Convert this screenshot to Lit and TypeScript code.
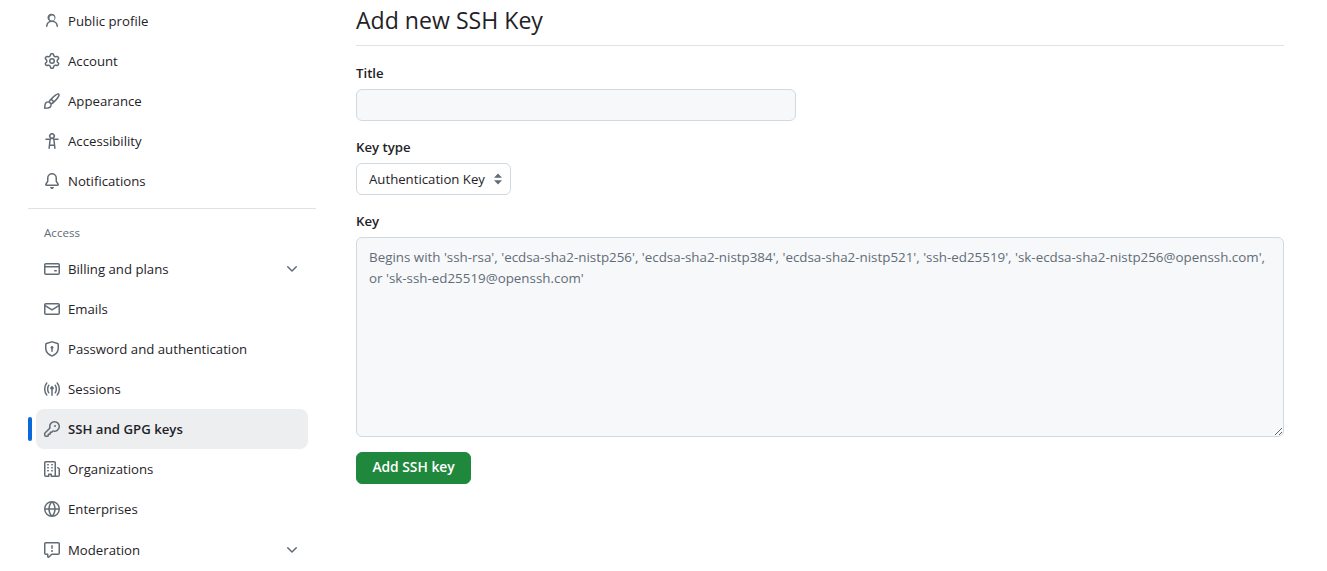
import { LitElement, html, css, svg } from "lit";
import { customElement } from "lit/decorators.js";

const ICONS: Record<string, string> = {
  person: "M10.561 8.073a6.005 6.005 0 0 1 3.432 5.142.75.75 0 1 1-1.498.07 4.5 4.5 0 0 0-8.99 0 .75.75 0 1 1-1.498-.07 6.004 6.004 0 0 1 3.431-5.142 3.999 3.999 0 1 1 4.123 0ZM10.5 5a2.5 2.5 0 1 0-5 0 2.5 2.5 0 0 0 5 0Z",
  gear: "M8 0a8.2 8.2 0 0 1 .701.031C9.444.095 9.99.645 10.16 1.29l.288 1.107c.018.066.079.158.212.224.231.114.454.243.668.386.123.082.233.09.299.071l1.103-.303c.644-.176 1.392.021 1.82.63.27.385.506.792.704 1.218.315.675.111 1.422-.364 1.891l-.814.806c-.049.048-.098.147-.088.294.016.257.016.515 0 .772-.01.147.038.246.088.294l.814.806c.475.469.679 1.216.364 1.891a7.977 7.977 0 0 1-.704 1.217c-.428.61-1.176.807-1.82.63l-1.102-.302c-.067-.019-.177-.011-.3.071a5.909 5.909 0 0 1-.668.386c-.133.066-.194.158-.211.224l-.29 1.106c-.168.646-.715 1.196-1.458 1.26a8.006 8.006 0 0 1-1.402 0c-.743-.064-1.289-.614-1.458-1.26l-.289-1.106c-.018-.066-.079-.158-.212-.224a5.738 5.738 0 0 1-.668-.386c-.123-.082-.233-.09-.299-.071l-1.103.303c-.644.176-1.392-.021-1.82-.63a8.12 8.12 0 0 1-.704-1.218c-.315-.675-.111-1.422.363-1.891l.815-.806c.05-.048.098-.147.088-.294a6.214 6.214 0 0 1 0-.772c.01-.147-.038-.246-.088-.294l-.815-.806C.635 6.045.431 5.298.746 4.623a7.92 7.92 0 0 1 .704-1.217c.428-.61 1.176-.807 1.82-.63l1.102.302c.067.019.177.011.3-.071.214-.143.437-.272.668-.386.133-.066.194-.158.211-.224l.29-1.106C6.009.645 6.556.095 7.299.03 7.53.01 7.764 0 8 0Zm-.571 1.525c-.036.003-.108.036-.137.146l-.289 1.105c-.147.561-.549.967-.998 1.189-.173.086-.34.183-.5.29-.417.278-.97.423-1.529.27l-1.103-.303c-.109-.03-.175.016-.195.045-.22.312-.412.644-.573.99-.014.031-.021.11.059.19l.815.806c.411.406.562.957.53 1.456a4.709 4.709 0 0 0 0 .582c.032.499-.119 1.05-.53 1.456l-.815.806c-.081.08-.073.159-.059.19.162.346.353.677.573.989.02.03.085.076.195.046l1.102-.303c.56-.153 1.113-.008 1.53.27.161.107.328.204.501.29.447.222.85.629.997 1.189l.289 1.105c.029.109.101.143.137.146a6.6 6.6 0 0 0 1.142 0c.036-.003.108-.036.137-.146l.289-1.105c.147-.561.549-.967.998-1.189.173-.086.34-.183.5-.29.417-.278.97-.423 1.529-.27l1.103.303c.109.029.175-.016.195-.045.22-.313.411-.644.573-.99.014-.031.021-.11-.059-.19l-.815-.806c-.411-.406-.562-.957-.53-1.456a4.709 4.709 0 0 0 0-.582c-.032-.499.119-1.05.53-1.456l.815-.806c.081-.08.073-.159.059-.19a6.464 6.464 0 0 0-.573-.989c-.02-.03-.085-.076-.195-.046l-1.102.303c-.56.153-1.113.008-1.53-.27a4.44 4.44 0 0 0-.501-.29c-.447-.222-.85-.629-.997-1.189l-.289-1.105c-.029-.11-.101-.143-.137-.146a6.6 6.6 0 0 0-1.142 0ZM11 8a3 3 0 1 1-6 0 3 3 0 0 1 6 0ZM9.5 8a1.5 1.5 0 1 0-3.001.001A1.5 1.5 0 0 0 9.5 8Z",
  paintbrush: "M11.134 1.535c.7-.509 1.416-.942 2.076-1.155.649-.21 1.463-.267 2.069.34.603.601.568 1.411.368 2.07-.202.668-.624 1.39-1.125 2.096-1.011 1.424-2.496 2.987-3.775 4.249-1.098 1.084-2.132 1.839-3.04 2.3a3.744 3.744 0 0 1-1.055 3.217c-.431.431-1.065.691-1.657.861-.614.177-1.294.287-1.914.357A21.151 21.151 0 0 1 .797 16H.743l.007-.75H.749L.742 16a.75.75 0 0 1-.743-.742l.743-.008-.742.007v-.054a21.25 21.25 0 0 1 .13-2.284c.067-.647.187-1.287.358-1.914.17-.591.43-1.226.86-1.657a3.746 3.746 0 0 1 3.227-1.054c.466-.893 1.225-1.907 2.314-2.982 1.271-1.255 2.833-2.75 4.245-3.777ZM1.62 13.089c-.051.464-.086.929-.104 1.395.466-.018.932-.053 1.396-.104a10.511 10.511 0 0 0 1.668-.309c.526-.151.856-.325 1.011-.48a2.25 2.25 0 1 0-3.182-3.182c-.155.155-.329.485-.48 1.01a10.515 10.515 0 0 0-.309 1.67Zm10.396-10.34c-1.224.89-2.605 2.189-3.822 3.384l1.718 1.718c1.21-1.205 2.51-2.597 3.387-3.833.47-.662.78-1.227.912-1.662.134-.444.032-.551.009-.575h-.001V1.78c-.014-.014-.113-.113-.548.027-.432.14-.995.462-1.655.942Zm-4.832 7.266-.001.001a9.859 9.859 0 0 0 1.63-1.142L7.155 7.216a9.7 9.7 0 0 0-1.161 1.607c.482.302.889.71 1.19 1.192Z",
  accessibility: "M9.923 5.302c.063.063.122.129.178.198H14A.75.75 0 0 1 14 7h-3.3l.578 5.163.362 2.997a.75.75 0 0 1-1.49.18L9.868 13H6.132l-.282 2.34a.75.75 0 0 1-1.49-.18l.362-2.997L5.3 7H2a.75.75 0 0 1 0-1.5h3.9a2.54 2.54 0 0 1 .176-.198 3 3 0 1 1 3.847 0ZM9.2 7.073h-.001a1.206 1.206 0 0 0-2.398 0L6.305 11.5h3.39ZM9.5 3a1.5 1.5 0 1 0-3.001.001A1.5 1.5 0 0 0 9.5 3Z",
  bell: "M8 16c.9 0 1.7-.6 1.9-1.5.1-.3-.1-.5-.4-.5h-3c-.3 0-.5.2-.4.5.2.9 1 1.5 1.9 1.5ZM3 5a5 5 0 0 1 10 0v2.947c0 .05.015.098.042.139l1.703 2.555A1.519 1.519 0 0 1 13.482 13H2.518a1.516 1.516 0 0 1-1.263-2.36l1.703-2.554A.255.255 0 0 0 3 7.947Zm5-3.5A3.5 3.5 0 0 0 4.5 5v2.947c0 .346-.102.683-.294.97l-1.703 2.556a.017.017 0 0 0-.003.01l.001.006c0 .002.002.004.004.006l.006.004.007.001h10.964l.007-.001.006-.004.004-.006.001-.007a.017.017 0 0 0-.003-.01l-1.703-2.554a1.745 1.745 0 0 1-.294-.97V5A3.5 3.5 0 0 0 8 1.5Z",
  card: "M10.75 9a.75.75 0 0 0 0 1.5h1.5a.75.75 0 0 0 0-1.5h-1.5ZM0 3.75C0 2.784.784 2 1.75 2h12.5c.966 0 1.75.784 1.75 1.75v8.5A1.75 1.75 0 0 1 14.25 14H1.75A1.75 1.75 0 0 1 0 12.25ZM14.5 6.5h-13v5.75c0 .138.112.25.25.25h12.5a.25.25 0 0 0 .25-.25Zm0-2.75a.25.25 0 0 0-.25-.25H1.75a.25.25 0 0 0-.25.25V5h13Z",
  mail: "M1.75 2h12.5c.966 0 1.75.784 1.75 1.75v8.5A1.75 1.75 0 0 1 14.25 14H1.75A1.75 1.75 0 0 1 0 12.25v-8.5C0 2.784.784 2 1.75 2ZM1.5 12.251c0 .138.112.25.25.25h12.5a.25.25 0 0 0 .25-.25V5.809L8.38 9.397a.75.75 0 0 1-.76 0L1.5 5.809v6.442Zm13-8.181v-.32a.25.25 0 0 0-.25-.25H1.75a.25.25 0 0 0-.25.25v.32L8 7.88Z",
  shield: "m8.533.133 5.25 1.68A1.75 1.75 0 0 1 15 3.48V7c0 1.566-.32 3.182-1.303 4.682-.983 1.498-2.585 2.813-5.032 3.855a1.697 1.697 0 0 1-1.33 0c-2.447-1.042-4.049-2.357-5.032-3.855C1.32 10.182 1 8.566 1 7V3.48a1.75 1.75 0 0 1 1.217-1.667l5.25-1.68a1.748 1.748 0 0 1 1.066 0Zm-.61 1.429.001.001-5.25 1.68a.251.251 0 0 0-.174.237V7c0 1.36.275 2.666 1.057 3.859.784 1.194 2.121 2.342 4.366 3.298a.196.196 0 0 0 .154 0c2.245-.957 3.582-2.103 4.366-3.297C13.225 9.666 13.5 8.358 13.5 7V3.48a.25.25 0 0 0-.174-.238l-5.25-1.68a.25.25 0 0 0-.153 0ZM9.5 6.5c0 .536-.286 1.032-.75 1.3v2.45a.75.75 0 0 1-1.5 0V7.8A1.5 1.5 0 1 1 9.5 6.5Z",
  broadcast: "M8.75 8.582v5.668a.75.75 0 0 1-1.5 0V8.582a1.75 1.75 0 1 1 1.5 0Zm3.983-7.125a.75.75 0 0 1 1.06.026A9.716 9.716 0 0 1 16 8a9.716 9.716 0 0 1-2.207 6.517.75.75 0 1 1-1.086-1.034A8.217 8.217 0 0 0 14.5 8a8.217 8.217 0 0 0-1.793-5.483.75.75 0 0 1 .026-1.06Zm-9.466 0c.3.286.312.76.026 1.06A8.217 8.217 0 0 0 1.5 8a8.217 8.217 0 0 0 1.793 5.483.75.75 0 1 1-1.086 1.034A9.716 9.716 0 0 1 0 8a9.716 9.716 0 0 1 2.207-6.517.75.75 0 0 1 1.06-.026Zm8.556 2.321A6.23 6.23 0 0 1 13 8a6.23 6.23 0 0 1-1.177 4.222.75.75 0 1 1-1.146-.964A4.73 4.73 0 0 0 11.5 8a4.73 4.73 0 0 0-.823-3.258.75.75 0 0 1 1.146-.964Zm-6.492.958A4.73 4.73 0 0 0 4.5 8a4.73 4.73 0 0 0 .823 3.258.75.75 0 0 1-1.146.964A6.23 6.23 0 0 1 3 8a6.23 6.23 0 0 1 1.177-4.222.75.75 0 1 1 1.146.958Z",
  key: "M10.5 0a5.499 5.499 0 1 1-1.288 10.848l-.932.932a.749.749 0 0 1-.53.22H7v.75a.749.749 0 0 1-.22.53l-.5.5a.749.749 0 0 1-.53.22H5v.75a.749.749 0 0 1-.22.53l-.5.5a.749.749 0 0 1-.53.22h-2A1.75 1.75 0 0 1 0 14.25v-2c0-.199.079-.389.22-.53l4.932-4.932A5.5 5.5 0 0 1 10.5 0Zm-4 5.5c-.001.431.069.86.205 1.269a.75.75 0 0 1-.181.768L1.5 12.56v1.69c0 .138.112.25.25.25h1.69l.06-.06v-1.19a.75.75 0 0 1 .75-.75h1.19l.06-.06v-1.19a.75.75 0 0 1 .75-.75h1.19l1.023-1.025a.75.75 0 0 1 .768-.18A4 4 0 1 0 6.5 5.5ZM11 6a1 1 0 1 1 0-2 1 1 0 0 1 0 2Z",
  organization: "M1.75 16A1.75 1.75 0 0 1 0 14.25V1.75C0 .784.784 0 1.75 0h8.5C11.216 0 12 .784 12 1.75v12.5c0 .085-.006.168-.018.25h2.268a.25.25 0 0 0 .25-.25V8.285a.25.25 0 0 0-.111-.208l-1.055-.703a.749.749 0 1 1 .832-1.248l1.055.703c.487.325.779.871.779 1.456v5.965A1.75 1.75 0 0 1 14.25 16h-3.5a.766.766 0 0 1-.197-.026c-.099.017-.2.026-.303.026h-3a.75.75 0 0 1-.75-.75V14h-1v1.25a.75.75 0 0 1-.75.75Zm-.25-1.75c0 .138.112.25.25.25H4v-1.25a.75.75 0 0 1 .75-.75h2.5a.75.75 0 0 1 .75.75v1.25h2.25a.25.25 0 0 0 .25-.25V1.75a.25.25 0 0 0-.25-.25h-8.5a.25.25 0 0 0-.25.25ZM3.75 6h.5a.75.75 0 0 1 0 1.5h-.5a.75.75 0 0 1 0-1.5ZM3 3.75A.75.75 0 0 1 3.75 3h.5a.75.75 0 0 1 0 1.5h-.5A.75.75 0 0 1 3 3.75Zm4 3A.75.75 0 0 1 7.75 6h.5a.75.75 0 0 1 0 1.5h-.5A.75.75 0 0 1 7 6.75ZM7.75 3h.5a.75.75 0 0 1 0 1.5h-.5a.75.75 0 0 1 0-1.5ZM3 9.75A.75.75 0 0 1 3.75 9h.5a.75.75 0 0 1 0 1.5h-.5A.75.75 0 0 1 3 9.75ZM7.75 9h.5a.75.75 0 0 1 0 1.5h-.5a.75.75 0 0 1 0-1.5Z",
  globe: "M8 0a8 8 0 1 1 0 16A8 8 0 0 1 8 0ZM5.78 8.75a9.64 9.64 0 0 0 1.363 4.177c.255.426.542.832.857 1.215.245-.296.551-.705.857-1.215A9.64 9.64 0 0 0 10.22 8.75Zm4.44-1.5a9.64 9.64 0 0 0-1.363-4.177c-.307-.51-.612-.919-.857-1.215a9.927 9.927 0 0 0-.857 1.215A9.64 9.64 0 0 0 5.78 7.25Zm-5.944 1.5H1.543a6.507 6.507 0 0 0 4.666 5.5c-.123-.181-.24-.365-.352-.552-.715-1.192-1.437-2.874-1.581-4.948Zm-2.733-1.5h2.733c.144-2.074.866-3.756 1.58-4.948.12-.197.237-.381.353-.552a6.507 6.507 0 0 0-4.666 5.5Zm10.181 1.5c-.144 2.074-.866 3.756-1.58 4.948-.12.197-.237.381-.353.552a6.507 6.507 0 0 0 4.666-5.5Zm2.733-1.5a6.507 6.507 0 0 0-4.666-5.5c.123.181.24.365.353.552.714 1.192 1.436 2.874 1.58 4.948Z",
  report: "M0 1.75C0 .784.784 0 1.75 0h12.5C15.216 0 16 .784 16 1.75v9.5A1.75 1.75 0 0 1 14.25 13H8.06l-2.573 2.573A1.458 1.458 0 0 1 3 14.543V13H1.75A1.75 1.75 0 0 1 0 11.25Zm1.75-.25a.25.25 0 0 0-.25.25v9.5c0 .138.112.25.25.25h2a.75.75 0 0 1 .75.75v2.19l2.72-2.72a.749.749 0 0 1 .53-.22h6.5a.25.25 0 0 0 .25-.25v-9.5a.25.25 0 0 0-.25-.25Zm7 2.25v2.5a.75.75 0 0 1-1.5 0v-2.5a.75.75 0 0 1 1.5 0ZM9 9a1 1 0 1 1-2 0 1 1 0 0 1 2 0Z",
  chevron: "M12.78 5.22a.749.749 0 0 1 0 1.06l-4.25 4.25a.749.749 0 0 1-1.06 0L3.22 6.28a.749.749 0 1 1 1.06-1.06L8 8.939l3.72-3.719a.749.749 0 0 1 1.06 0Z",
};

const icon = (name: string) => html`<svg class="icon" viewBox="0 0 16 16" width="16" height="16" aria-hidden="true">${svg`<path fill="currentColor" d=${ICONS[name]}></path>`}</svg>`;

interface Item { label: string; icon: string; chevron?: boolean; active?: boolean; }

const TOP: Item[] = [
  { label: "Public profile", icon: "person" },
  { label: "Account", icon: "gear" },
  { label: "Appearance", icon: "paintbrush" },
  { label: "Accessibility", icon: "accessibility" },
  { label: "Notifications", icon: "bell" },
];
const ACCESS: Item[] = [
  { label: "Billing and plans", icon: "card", chevron: true },
  { label: "Emails", icon: "mail" },
  { label: "Password and authentication", icon: "shield" },
  { label: "Sessions", icon: "broadcast" },
  { label: "SSH and GPG keys", icon: "key", active: true },
  { label: "Organizations", icon: "organization" },
  { label: "Enterprises", icon: "globe" },
  { label: "Moderation", icon: "report", chevron: true },
];

const PLACEHOLDER = "Begins with 'ssh-rsa', 'ecdsa-sha2-nistp256', 'ecdsa-sha2-nistp384', 'ecdsa-sha2-nistp521', 'ssh-ed25519', 'sk-ecdsa-sha2-nistp256@openssh.com',\nor 'sk-ssh-ed25519@openssh.com'";

@customElement("app-root")
export class AppRoot extends LitElement {
  static styles = css`
    :host {
      display: block;
      height: 571px;
      overflow: hidden;
      background: #fff;
      color: #1f2328;
      font-family: "Open Sans", "Noto Sans", sans-serif;
      font-size: 13.2px;
    }
    .page { display: flex; align-items: flex-start; padding: 1px 43px 0 28px; }
    .side { width: 288px; flex: none; margin-right: 40px; }
    .row {
      position: relative;
      display: flex;
      align-items: center;
      height: 40px;
      margin: 0 8px;
      padding: 0 8px;
      border-radius: 8px;
      gap: 8px;
    }
    .row .icon { color: #636c76; flex: none; }
    .row .label { flex: 1; white-space: nowrap; }
    .row.active { background: #eceef0; font-weight: 600; }
    .row.active::before {
      content: "";
      position: absolute;
      left: -8px;
      top: 8px;
      width: 4px;
      height: 24px;
      border-radius: 6px;
      background: #0969da;
    }
    .chev { display: flex; color: #636c76; }
    .row.last { margin-top: 1px; }
    .divider { height: 1px; background: #dfe3e8; margin: 7px 0 0; }
    .group {
      font-size: 11.6px;
      color: #636c76;
      padding: 0 16px;
      height: 20px;
      margin-top: 13px;
      margin-bottom: 7px;
      display: flex;
      align-items: center;
    }
    .main { flex: 1; min-width: 0; }
    h1 {
      margin: 0;
      height: 44px;
      line-height: 38px;
      font-size: 23.1px;
      font-weight: 400;
      border-bottom: 1px solid #dfe3e8;
    }
    label {
      display: block;
      height: 20px;
      font-weight: 600;
      line-height: 20px;
      margin-bottom: 6px;
    }
    .f1 { margin-top: 17px; }
    .f2, .f3 { margin-top: 16px; }
    input, select, textarea {
      display: block;
      font: inherit;
      color: #1f2328;
      box-sizing: border-box;
      border: 1px solid #d1d9e0;
      border-radius: 6px;
      outline: none;
    }
    input { width: 440px; height: 32px; background: #f6f8fa; padding: 0 12px; }
    .select-wrap { position: relative; width: 155px; height: 32px; }
    select {
      appearance: none;
      width: 100%;
      height: 100%;
      background: #fff;
      padding: 0 24px 0 12px;
    }
    .updown { position: absolute; right: 8px; top: 10px; }
    textarea {
      width: 100%;
      height: 200px;
      padding: 9px 12px 7px;
      background: #f6f8fa;
      font-size: 13.36px;
      line-height: 21px;
    }
    textarea::placeholder { color: #636c76; opacity: 1; }
    .submit {
      display: block;
      margin-top: 15px;
      width: 115px;
      height: 32px;
      border: 1px solid #1f883d;
      border-radius: 6px;
      background: #1f883d;
      color: #fff;
      font: inherit;
      font-size: 13.8px;
      font-weight: 600;
      line-height: 28px;
      padding: 0 0 2px;
    }
  `;

  private row(i: Item, last = false) {
    const cls = `row${i.active ? " active" : ""}${last ? " last" : ""}`;
    return html`<div class=${cls}>
      ${icon(i.icon)}
      <span class="label">${i.label}</span>
      ${i.chevron ? html`<span class="chev">${icon("chevron")}</span>` : null}
    </div>`;
  }

  render() {
    return html`<div class="page">
      <nav class="side">
        ${TOP.map((i) => this.row(i))}
        <div class="divider"></div>
        <div class="group">Access</div>
        ${ACCESS.map((i, n) => this.row(i, n === ACCESS.length - 1))}
      </nav>
      <main class="main">
        <h1>Add new SSH Key</h1>
        <div class="f1"><label for="t">Title</label><input id="t" type="text" /></div>
        <div class="f2">
          <label for="k">Key type</label>
          <div class="select-wrap">
            <select id="k"><option>Authentication Key</option><option>Signing Key</option></select>
            <svg class="updown" width="10" height="12" viewBox="0 0 10 12" aria-hidden="true"><path fill="#636c76" d="M5 0.5 9 4.8H1ZM5 11.5 1 7.2H9Z"></path></svg>
          </div>
        </div>
        <div class="f3"><label for="v">Key</label><textarea id="v" placeholder=${PLACEHOLDER}></textarea></div>
        <button class="submit" type="button">Add SSH key</button>
      </main>
    </div>`;
  }
}
